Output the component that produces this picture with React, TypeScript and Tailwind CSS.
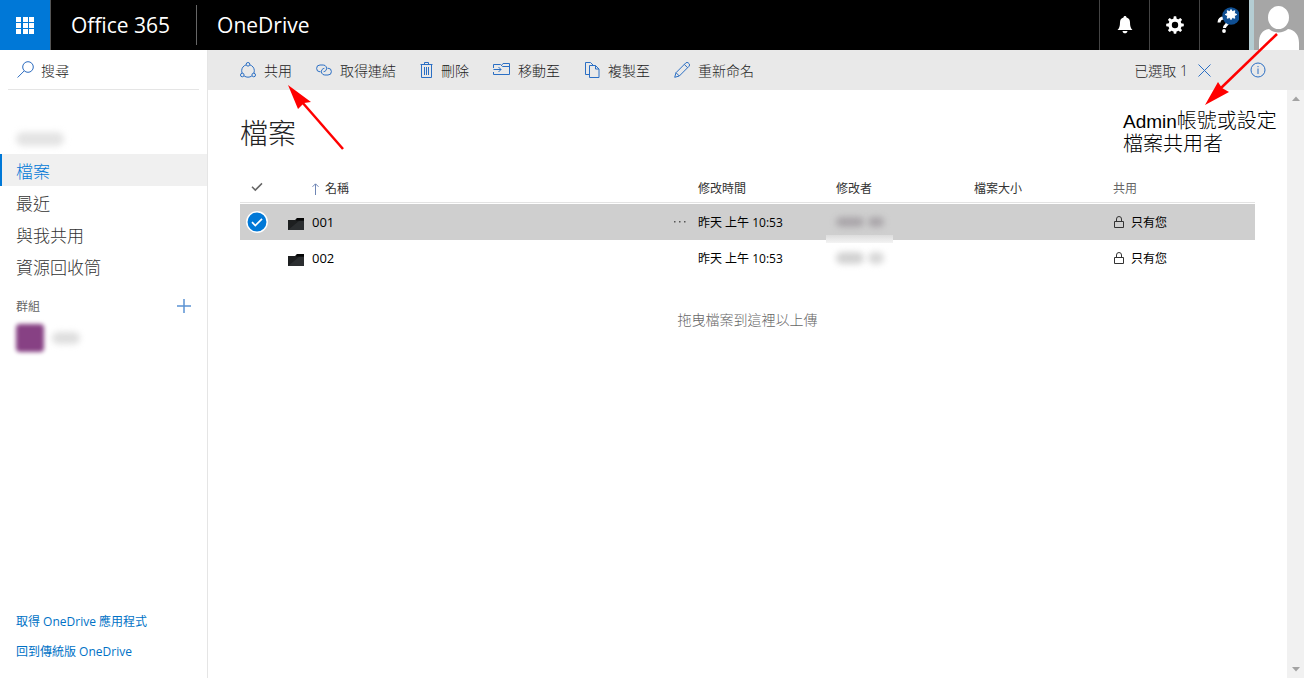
import type { ReactNode } from "react";

type IconProps = { className?: string };

function ShareIcon() {
  return (
    <svg width="16" height="16" viewBox="0 0 16 16" fill="none" stroke="currentColor">
      <circle cx="8" cy="2.3" r="1.8" />
      <circle cx="2.3" cy="13" r="1.8" />
      <circle cx="13.7" cy="13" r="1.8" />
      <path d="M6.2 2.8C3.4 3.7 1.7 6 1.7 8.6c0 .9.1 1.7.5 2.5M9.8 2.8c2.8.9 4.5 3.2 4.5 5.8 0 .9-.1 1.7-.5 2.5M4.2 14c2.4 1.6 5.2 1.6 7.6 0" />
    </svg>
  );
}

function LinkIcon() {
  return (
    <svg width="16" height="16" viewBox="0 0 16 16" fill="none" stroke="currentColor">
      <path d="M4.5 9.8H4A3.4 3.4 0 0 1 4 3h3.2a3.4 3.4 0 0 1 2.7 5.5c-.5.7-1.4 1.1-2.3 1.2" />
      <path d="M11.5 6.2h.5a3.4 3.4 0 0 1 0 6.8H8.8a3.4 3.4 0 0 1-2.7-5.5c.5-.7 1.4-1.1 2.3-1.2" />
    </svg>
  );
}

function TrashIcon() {
  return (
    <svg width="13" height="16" viewBox="0 0 13 16" fill="none" stroke="currentColor">
      <path d="M.5 2.5h12M4.5 2.5v-2h4v2M1.5 2.5v13h10v-13M4.5 5v8M6.5 5v8M8.5 5v8" />
    </svg>
  );
}

function MoveIcon() {
  return (
    <svg width="17" height="16" viewBox="0 0 17 16" fill="none" stroke="currentColor">
      <path d="M.5 6V2.500h7l2 2h7M8.500 3.500l1.500-2h6.500v11H.5V10M.5 7.500h7.500M5.500 5L8 7.500 5.500 10" />
    </svg>
  );
}

function CopyIcon() {
  return (
    <svg width="16" height="16" viewBox="0 0 16 16" fill="none" stroke="currentColor">
      <path d="M5 12.5H1.5V.5h5L9 3M5.5 3.5h6l3.500 3.500v8.500H5.500zM11.500 3.500V7H15" />
    </svg>
  );
}

function PencilIcon() {
  return (
    <svg width="16" height="16" viewBox="0 0 16 16" fill="none" stroke="currentColor">
      <path d="M.7 15.300l1.300-4.600L11.700 1a1.900 1.900 0 0 1 2.700 0l.6.6a1.900 1.900 0 0 1 0 2.700L5.300 14zM2 10.700L5.300 14M10.300 2.400l3.300 3.300" />
    </svg>
  );
}

function SearchIcon() {
  return (
    <svg width="17" height="17" viewBox="0 0 17 17" fill="none" stroke="currentColor" className="shrink-0">
      <circle cx="11" cy="6" r="5.300" />
      <path d="M7.200 9.900L.6 16.500" />
    </svg>
  );
}

function LockIcon() {
  return (
    <svg width="10" height="12" viewBox="0 0 10 12" fill="none" stroke="#333">
      <path d="M.5 5.500h9v6h-9zM2.500 5.500V3a2.500 2.500 0 0 1 5 0v2.500" />
    </svg>
  );
}

function FolderIcon() {
  return (
    <svg width="16" height="12" viewBox="0 0 16 12">
      <path d="M0 2h7l2-2h7v12H0z" fill="#1d1f20" />
      <path d="M9 0h7v2.500H8z" fill="#050505" />
      <path d="M0 12L11 3h5v9z" fill="#2b2e30" />
    </svg>
  );
}

function BellIcon() {
  return (
    <svg width="16" height="18" viewBox="0 0 16 18" fill="currentColor">
      <path d="M8 0c.9 0 1.400.6 1.500 1.400C12 2 13 4 13 6.500c0 4 .8 5.800 2.500 7.500H.5C2.200 12.300 3 10.500 3 6.500 3 4 4 2 6.500 1.400 6.600.6 7.100 0 8 0zM5.500 15h5c-.2 1.500-1.200 2.300-2.500 2.300S5.700 16.500 5.500 15z" />
    </svg>
  );
}

function GearIcon() {
  const teeth = [0, 45, 90, 135, 180, 225, 270, 315];
  return (
    <svg width="18" height="18" viewBox="-9 -9 18 18">
      <circle r="4.900" fill="none" stroke="currentColor" strokeWidth="3.400" />
      {teeth.map((angle) => (
        <path key={angle} d="M-1.700-6l.5-2.800h2.400L1.700-6z" fill="currentColor" transform={`rotate(${angle})`} />
      ))}
    </svg>
  );
}

function HelpIcon() {
  return (
    <svg width="28" height="28" viewBox="0 0 28 28" fill="none">
      <path d="M8 15.500c.2-3.200 1.800-4.500 4.800-4.500 2.700 0 4.300 1.400 4.300 3.600 0 3.400-3.600 3.200-3.600 6.400" stroke="#fff" strokeWidth="3" />
      <circle cx="13" cy="24" r="1.900" fill="#fff" />
      <circle cx="20" cy="9" r="8.700" fill="#0f4f93" />
      <path
        transform="translate(3 -1)"
        d="M17 3.500l1.300 2.100 2.500-.8-.6 2.500 2.600 1.200-2.600 1.200.6 2.500-2.500-.7L17 13.600l-1.300-2.100-2.500.7.6-2.500-2.600-1.200 2.600-1.200-.6-2.500 2.500.8z"
        fill="#fff"
        stroke="#fff"
      />
    </svg>
  );
}

function CheckIcon({ className }: IconProps) {
  return (
    <svg width="12" height="10" viewBox="0 0 12 10" fill="none" stroke="currentColor" strokeWidth="1.500" className={className}>
      <path d="M1 4.800l3.300 3.300L11 1.400" />
    </svg>
  );
}

const commands: { label: string; icon: ReactNode }[] = [
  { label: "共用", icon: <ShareIcon /> },
  { label: "取得連結", icon: <LinkIcon /> },
  { label: "刪除", icon: <TrashIcon /> },
  { label: "移動至", icon: <MoveIcon /> },
  { label: "複製至", icon: <CopyIcon /> },
  { label: "重新命名", icon: <PencilIcon /> },
];

const navItems = [
  { label: "檔案", active: true },
  { label: "最近", active: false },
  { label: "與我共用", active: false },
  { label: "資源回收筒", active: false },
];

const files = [
  { name: "001", modified: "昨天 上午 10:53", sharing: "只有您", selected: true },
  { name: "002", modified: "昨天 上午 10:53", sharing: "只有您", selected: false },
];

function Header() {
  return (
    <header className="flex h-[50px] items-stretch bg-black text-white">
      <button type="button" aria-label="應用程式啟動器" className="flex w-[51px] items-center justify-center border-r border-[#555] bg-[#0078d7]">
        <svg width="18" height="17" viewBox="0 0 18 17" fill="#fff">
          {[0, 6, 12].map((y) => [0, 7, 13].map((x) => <rect key={`${x}-${y}`} x={x} y={y} width="5" height="5" />))}
        </svg>
      </button>
      <div className="flex items-center text-[21px] leading-7">
        <a href="#" className="pl-5 pr-[26px]">Office 365</a>
        <span className="h-10 w-px bg-[#666]" />
        <a href="#" className="pl-5">OneDrive</a>
      </div>
      <div className="ml-auto flex">
        <button type="button" aria-label="通知" className="flex w-[50px] items-center justify-center border-l border-[#444]">
          <BellIcon />
        </button>
        <button type="button" aria-label="設定" className="flex w-[50px] items-center justify-center border-l border-[#444]">
          <GearIcon />
        </button>
        <button type="button" aria-label="說明" className="flex w-[50px] items-start justify-center border-l border-[#444] pt-[7px]">
          <HelpIcon />
        </button>
        <button type="button" aria-label="帳戶" className="w-[55px] border-l-5 border-[#b4cdd3] bg-[#a6a6a6]">
          <svg width="50" height="50" viewBox="0 0 50 50" fill="#fff">
            <ellipse cx="24.500" cy="17.500" rx="10.500" ry="11.500" />
            <path d="M5 50V43c0-8 3-13 10-14 5 4.500 14 4.500 19 0 7 1 11 6 11 14v7z" />
          </svg>
        </button>
      </div>
    </header>
  );
}

function Sidebar() {
  return (
    <aside className="flex w-52 shrink-0 flex-col border-r border-[#e5e5e5]">
      <label className="mx-2 flex h-10 items-center gap-[7px] border-b border-[#e5e5e5] pl-[9px] text-[#2b6bbf]">
        <SearchIcon />
        <input
          type="search"
          aria-label="搜尋"
          placeholder="搜尋"
          className="w-full min-w-0 bg-transparent pt-0.5 text-sm font-light text-[#222] outline-none placeholder:text-[#222]"
        />
      </label>
      <div className="flex h-16 items-end px-4 pb-2">
        <span className="h-3.5 w-12 rounded-full bg-[#e4e4e4] blur-[3px]" />
      </div>
      <nav>
        {navItems.map((item) => (
          <a
            key={item.label}
            href="#"
            className={
              item.active
                ? "flex h-8 items-center border-l-2 border-[#0078d7] bg-[#f0f0f0] pl-3.5 pt-1 text-[17px] font-light text-[#0078d7]"
                : "flex h-8 items-center pl-4 pt-1 text-[17px] font-light text-[#333]"
            }
          >
            {item.label}
          </a>
        ))}
      </nav>
      <div className="flex h-10 items-center justify-between px-4 pt-2">
        <h2 className="pt-0.5 text-xs text-[#666]">群組</h2>
        <button type="button" aria-label="新增群組" className="text-[#5b93d3]">
          <svg width="14" height="14" viewBox="0 0 14 14" stroke="currentColor" strokeWidth="1.500">
            <path d="M0 7h14M7 0v14" />
          </svg>
        </button>
      </div>
      <div className="flex h-8 items-center gap-2 pl-4">
        <span className="h-7 w-7 rounded-sm bg-[#874184] blur-[2px]" />
        <span className="h-3 w-7 rounded-full bg-[#dedede] blur-[3px]" />
      </div>
      <div className="mt-auto flex flex-col pb-[11px] pl-4 text-xs text-[#0072c6]">
        <a href="#" className="flex h-[30px] items-center">取得 OneDrive 應用程式</a>
        <a href="#" className="flex h-[30px] items-center">回到傳統版 OneDrive</a>
      </div>
    </aside>
  );
}

function CommandBar() {
  return (
    <div className="flex h-10 items-center bg-[#e9e9e9] pl-8 pr-[38px] text-sm font-light text-[#222]">
      <div className="flex gap-6">
        {commands.map((command) => (
          <button key={command.label} type="button" className="flex items-center gap-2 whitespace-nowrap">
            <span className="text-[#2b6fc4]">{command.icon}</span>
            <span className="pt-0.5">{command.label}</span>
          </button>
        ))}
      </div>
      <div className="ml-auto flex items-center">
        <span className="pt-0.5">已選取 1</span>
        <button type="button" aria-label="清除選取" className="ml-2.5 text-[#2b6fc4]">
          <svg width="13" height="13" viewBox="0 0 13 13" stroke="currentColor">
            <path d="M.5.5l12 12M12.500.5l-12 12" />
          </svg>
        </button>
        <button type="button" aria-label="資訊" className="ml-[39px] text-[#2b6fc4]">
          <svg width="16" height="16" viewBox="0 0 16 16" fill="none" stroke="currentColor">
            <circle cx="8" cy="8" r="7" />
            <path d="M8 6.500V12M8 4v1.200" />
          </svg>
        </button>
      </div>
    </div>
  );
}

function FileTable() {
  return (
    <table className="mt-5 w-full table-fixed border-separate border-spacing-0 text-left text-xs text-black">
      <colgroup>
        <col className="w-12" />
        <col className="w-6" />
        <col />
        <col className="w-[27px]" />
        <col className="w-[138px]" />
        <col className="w-[138px]" />
        <col className="w-[139px]" />
        <col className="w-[142px]" />
      </colgroup>
      <thead>
        <tr className="h-8 text-[#333] *:border-b *:border-white *:p-0 *:pt-0.5 *:font-normal *:shadow-[inset_0_-1px_0_#e3e3e3]">
          <th>
            <label className="flex pb-1 pl-[11px] text-[#666]">
              <input type="checkbox" aria-label="全選" className="sr-only" />
              <CheckIcon />
            </label>
          </th>
          <th />
          <th>
            <span className="flex items-center gap-1.5">
              <svg width="7" height="12" viewBox="0 0 7 12" fill="none" stroke="#6f86b5">
                <path d="M3.500 12V1M.5 3.800l3-3 3 3" />
              </svg>
              名稱
            </span>
          </th>
          <th />
          <th>修改時間</th>
          <th>修改者</th>
          <th>檔案大小</th>
          <th className="text-[#666]">共用</th>
        </tr>
      </thead>
      <tbody>
        {files.map((file) => (
          <tr key={file.name} className={file.selected ? "h-9 bg-[#cfcfcf] *:p-0" : "h-9 *:p-0"}>
            <td>
              <label className="flex pl-1.5">
                <input type="checkbox" aria-label={`選取 ${file.name}`} defaultChecked={file.selected} className="sr-only" />
                {file.selected && (
                  <svg width="22" height="22" viewBox="0 0 22 22" fill="none">
                    <circle cx="11" cy="11" r="10.200" fill="#0078d7" stroke="#fff" strokeWidth="1.500" />
                    <path d="M6 11.200l3.300 3.300L16 7.800" stroke="#fff" strokeWidth="1.700" />
                  </svg>
                )}
              </label>
            </td>
            <td>
              <span className="flex pt-1">
                <FolderIcon />
              </span>
            </td>
            <td className="text-[13px]">
              <a href="#" className="block pt-0.5">{file.name}</a>
            </td>
            <td>
              {file.selected && (
                <button type="button" aria-label="更多" className="flex pl-0.5 text-[#555]">
                  <svg width="14" height="4" viewBox="0 0 14 4" fill="currentColor">
                    <path d="M1 1h1.500v1.500H1zM6 1h1.500v1.500H6zM11 1h1.500v1.500H11z" />
                  </svg>
                </button>
              )}
            </td>
            <td>
              <span className="block pt-0.5">{file.modified}</span>
            </td>
            <td>
              {file.selected ? (
                <span className="relative flex items-center gap-1">
                  <span className="h-2.5 w-7 rounded-full bg-[#aaa6aa] blur-[3px]" />
                  <span className="h-2.5 w-4 rounded-full bg-[#aaa6aa] blur-[3px]" />
                  <span className="absolute -left-2.5 top-[18px] h-2 w-[67px] bg-linear-to-b from-[#dcdcdc] to-[#f4f4f4]" />
                </span>
              ) : (
                <span className="flex items-center gap-1">
                  <span className="h-3 w-7 rounded-full bg-[#d2d2d2] blur-[3px]" />
                  <span className="h-3 w-4 rounded-full bg-[#d8d8d8] blur-[3px]" />
                </span>
              )}
            </td>
            <td />
            <td>
              <span className="flex items-center gap-[7px] pl-px">
                <LockIcon />
                <span className="pt-0.5">{file.sharing}</span>
              </span>
            </td>
          </tr>
        ))}
      </tbody>
    </table>
  );
}

function ScrollTrack() {
  return (
    <div className="flex w-[17px] shrink-0 flex-col items-center justify-between bg-[#f1f1f1] py-1.5" aria-hidden="true">
      <svg width="8" height="5" viewBox="0 0 8 5" fill="#a3a3a3">
        <path d="M0 5l4-4.500L8 5z" />
      </svg>
      <svg width="8" height="5" viewBox="0 0 8 5" fill="#a3a3a3">
        <path d="M0 0l4 4.500L8 0z" />
      </svg>
    </div>
  );
}

function Annotations() {
  return (
    <>
      <svg className="pointer-events-none absolute left-[286px] top-[84px]" width="60" height="68" viewBox="0 0 60 68">
        <path d="M57 65L16 18" stroke="#f00" strokeWidth="2.500" />
        <path d="M2 1l23 17-7 1-6 6z" fill="#f00" />
      </svg>
      <svg className="pointer-events-none absolute right-6 top-8" width="78" height="76" viewBox="0 0 78 76">
        <path d="M75 2L19 56" stroke="#f00" strokeWidth="2.500" />
        <path d="M3 73l13-23 4 6 7 4z" fill="#f00" />
      </svg>
      <p className="absolute right-[27px] top-[110px] w-[154px] font-['Liberation_Sans','Noto_Sans_CJK_TC',sans-serif] text-[20px] font-light leading-[22px] text-black">
        <span className="whitespace-nowrap">
          <span className="text-[19px]">Admin</span>帳號或設定
        </span>
        <br />
        檔案共用者
      </p>
    </>
  );
}

export default function App() {
  return (
    <div className="relative flex min-h-screen flex-col bg-white font-['Open_Sans','Noto_Sans_CJK_TC',sans-serif]">
      <Header />
      <div className="flex flex-1">
        <Sidebar />
        <div className="flex min-w-0 flex-1 flex-col">
          <CommandBar />
          <div className="flex flex-1">
            <main className="min-w-0 flex-1 px-8 pt-6">
              <h1 className="text-[28px] font-light leading-[38px] text-[#222]">檔案</h1>
              <FileTable />
              <p className="pt-[34px] text-center text-sm font-light text-[#666]">拖曳檔案到這裡以上傳</p>
            </main>
            <ScrollTrack />
          </div>
        </div>
      </div>
      <Annotations />
    </div>
  );
}
